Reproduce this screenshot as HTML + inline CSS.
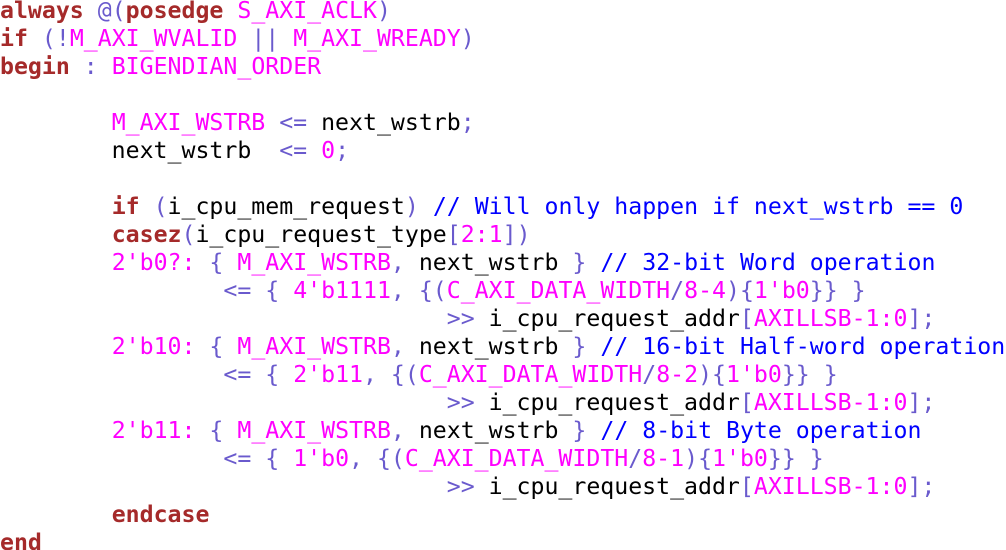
<!DOCTYPE html>
<html><head><style>
html,body{margin:0;padding:0;background:#fff;width:1006px;height:550px;overflow:hidden}
pre{margin:-3px 0 0 0;font-family:"DejaVu Sans Mono","Liberation Mono",monospace;font-size:23.2px;line-height:28px;color:#000}
.k{color:#a52a2a;font-weight:bold}.o{color:#6a5acd}.m{color:#ff00ff}.c{color:#0000ff}
</style></head><body><pre><span class="k">always</span> <span class="o">@(</span><span class="k">posedge</span> <span class="m">S_AXI_ACLK</span><span class="o">)</span>
<span class="k">if</span> <span class="o">(!</span><span class="m">M_AXI_WVALID</span> <span class="o">||</span> <span class="m">M_AXI_WREADY</span><span class="o">)</span>
<span class="k">begin</span> <span class="o">:</span> <span class="m">BIGENDIAN_ORDER</span>

        <span class="m">M_AXI_WSTRB</span> <span class="o">&lt;=</span> next_wstrb<span class="o">;</span>
        next_wstrb  <span class="o">&lt;=</span> <span class="m">0</span><span class="o">;</span>

        <span class="k">if</span> <span class="o">(</span>i_cpu_mem_request<span class="o">)</span> <span class="c">// Will only happen if next_wstrb == 0</span>
        <span class="k">casez</span><span class="o">(</span>i_cpu_request_type<span class="o">[</span><span class="m">2:1</span><span class="o">])</span>
        <span class="m">2'b0?:</span> <span class="o">{</span> <span class="m">M_AXI_WSTRB</span><span class="o">,</span> next_wstrb <span class="o">}</span> <span class="c">// 32-bit Word operation</span>
                <span class="o">&lt;= {</span> <span class="m">4'b1111</span><span class="o">, {(</span><span class="m">C_AXI_DATA_WIDTH</span><span class="o">/</span><span class="m">8-4</span><span class="o">){</span><span class="m">1'b0</span><span class="o">}} }</span>
                                <span class="o">&gt;&gt;</span> i_cpu_request_addr<span class="o">[</span><span class="m">AXILLSB-1:0</span><span class="o">];</span>
        <span class="m">2'b10:</span> <span class="o">{</span> <span class="m">M_AXI_WSTRB</span><span class="o">,</span> next_wstrb <span class="o">}</span> <span class="c">// 16-bit Half-word operation</span>
                <span class="o">&lt;= {</span> <span class="m">2'b11</span><span class="o">, {(</span><span class="m">C_AXI_DATA_WIDTH</span><span class="o">/</span><span class="m">8-2</span><span class="o">){</span><span class="m">1'b0</span><span class="o">}} }</span>
                                <span class="o">&gt;&gt;</span> i_cpu_request_addr<span class="o">[</span><span class="m">AXILLSB-1:0</span><span class="o">];</span>
        <span class="m">2'b11:</span> <span class="o">{</span> <span class="m">M_AXI_WSTRB</span><span class="o">,</span> next_wstrb <span class="o">}</span> <span class="c">// 8-bit Byte operation</span>
                <span class="o">&lt;= {</span> <span class="m">1'b0</span><span class="o">, {(</span><span class="m">C_AXI_DATA_WIDTH</span><span class="o">/</span><span class="m">8-1</span><span class="o">){</span><span class="m">1'b0</span><span class="o">}} }</span>
                                <span class="o">&gt;&gt;</span> i_cpu_request_addr<span class="o">[</span><span class="m">AXILLSB-1:0</span><span class="o">];</span>
        <span class="k">endcase</span>
<span class="k">end</span></pre></body></html>
